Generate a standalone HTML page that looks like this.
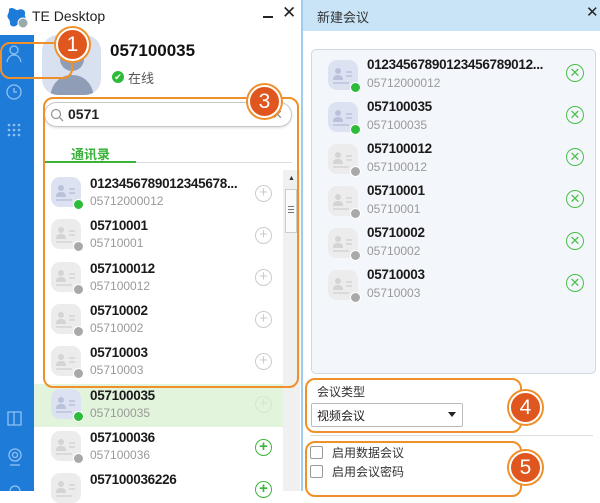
<!DOCTYPE html>
<html><head><meta charset="utf-8"><style>
*{margin:0;padding:0;box-sizing:border-box}
body{width:600px;height:491px;overflow:hidden;background:#fff;font-family:"Liberation Sans","Noto Sans CJK SC",sans-serif;position:relative}
.a{position:absolute}
.av{position:absolute;width:30px;height:30px;border-radius:9px;background:#dde2f2}
.av.off{background:#ececec}
.av svg{position:absolute;left:0;top:0}
.dot{position:absolute;right:-3px;bottom:-3px;width:11px;height:11px;border-radius:50%;background:#2dbb3a;border:1.5px solid #fff}
.av.off .dot{background:#a9a9a9}
.nm{position:absolute;font-size:13.5px;font-weight:bold;color:#1a1a1a;white-space:nowrap;letter-spacing:-0.3px}
.sb{position:absolute;font-size:12px;color:#999;white-space:nowrap}
.plus{position:absolute;width:17px;height:17px;border-radius:50%;border:1px solid #ccc;color:#ccc;font-size:15px;line-height:14px;text-align:center}
.plus.g{border:1.5px solid #3db43a;color:#3db43a;font-weight:bold}
.xx{position:absolute;width:18px;height:18px;border-radius:50%;border:1.5px solid #4cc04a;color:#4cc04a;font-size:13px;line-height:15px;text-align:center}
.box{position:absolute;border:2px solid #f0902a;border-radius:10px}
.num{position:absolute;width:33px;height:33px;border-radius:50%;background:#e0561f;border:2px solid #fff;box-shadow:0 0 0 2px #f0902a;color:#fff;font-size:21px;line-height:29px;text-align:center;font-family:"Liberation Sans",sans-serif}
</style></head><body>
<div class="a" style="left:0;top:35px;width:34px;height:456px;background:#1f7bd8"></div>
<svg class="a" style="left:0;top:35px" width="34" height="456" fill="none" stroke="#8fc2f2" stroke-width="1.3">
<circle cx="14" cy="15" r="4"/><path d="M7 27c1-5 4-7 7-7s6 2 7 7"/>
<circle cx="14" cy="57" r="7"/><path d="M14 53v4h3"/>
<g fill="#8fc2f2" stroke="none"><circle cx="9" cy="90" r="1.3"/><circle cx="14" cy="90" r="1.3"/><circle cx="19" cy="90" r="1.3"/><circle cx="9" cy="95" r="1.3"/><circle cx="14" cy="95" r="1.3"/><circle cx="19" cy="95" r="1.3"/><circle cx="9" cy="100" r="1.3"/><circle cx="14" cy="100" r="1.3"/><circle cx="19" cy="100" r="1.3"/></g>
<path d="M8 377h6v13h-6zM14 377h7v13h-7z"/>
<circle cx="15" cy="420" r="6"/><circle cx="15" cy="420" r="2.5"/><path d="M10 430h10"/>
<circle cx="15" cy="456" r="5"/>
</svg>
<svg class="a" style="left:4px;top:5px" width="26" height="24"><path d="M5 4c4-3 7 2 9 1 3-2 8 0 7 4-1 3 3 5 0 8-3 3-6 0-8 3-3 3-8 1-7-3 0-3-4-4-2-8 1-2 1-3 1-5z" fill="#1f7bd8"/><circle cx="19" cy="18" r="5" fill="#9aa" stroke="#fff"/></svg>
<div class="a" style="left:32px;top:8px;font-size:14px;color:#222">TE Desktop</div>
<div class="a" style="left:263px;top:16px;width:10px;height:2px;background:#222"></div>
<div class="a" style="left:282px;top:3px;font-size:17px;color:#222">✕</div>
<div class="a" style="left:42px;top:35px;width:59px;height:60px;border-radius:16px;background:#d9e0f0;overflow:hidden"><svg width="59" height="60"><circle cx="30" cy="24" r="12" fill="#909db6"/><path d="M8 62c2-16 12-22 22-22s20 6 22 22z" fill="#909db6"/></svg></div>
<div class="a" style="left:110px;top:41px;font-size:17px;font-weight:bold;color:#111">057100035</div>
<div class="a" style="left:112px;top:71px;width:12px;height:12px;border-radius:50%;background:#2dbb3a;color:#fff;font-size:9px;line-height:12px;text-align:center">✔</div>
<div class="a" style="left:128px;top:68px;font-size:13px;color:#555">在线</div>
<div class="a" style="left:44px;top:102px;width:248px;height:25px;border:1px solid #c8c8c8;border-radius:13px;box-shadow:0 1px 2px #ddd"></div>
<svg class="a" style="left:50px;top:108px" width="14" height="14" fill="none" stroke="#999" stroke-width="1.3"><circle cx="6" cy="6" r="4.5"/><path d="M9.5 9.5l3.5 3.5"/></svg>
<div class="a" style="left:68px;top:106px;font-size:14px;font-weight:bold;color:#222">0571</div>
<div class="a" style="left:272px;top:107px;font-size:13px;color:#888">✕</div>
<div class="a" style="left:71px;top:144px;font-size:13px;font-weight:bold;color:#3bb33a">通讯录</div>
<div class="a" style="left:44px;top:162px;width:248px;height:1px;background:#ddd"></div>
<div class="a" style="left:44px;top:161px;width:92px;height:2px;background:#3bb33a"></div>
<div class="a" style="left:283px;top:170px;width:17px;height:321px;background:#f0f0f0"></div>
<div class="a" style="left:285px;top:189px;width:12px;height:44px;background:#fafafa;border:1px solid #ccc"></div>
<div class="a" style="left:288px;top:175px;font-size:7px;color:#333">▲</div>
<div class="a" style="left:288px;top:206px;width:6px;height:1px;background:#777;box-shadow:0 3px #777,0 6px #777"></div>
<div class="a" style="left:34px;top:384px;width:249px;height:43px;background:#e2f4dc"></div>

<div class="av" style="left:51px;top:177px"><svg width="30" height="30"><circle cx="10" cy="11" r="3" fill="#b9c2da"/><path d="M5 20c0-4 2-5 5-5s5 1 5 5z" fill="#b9c2da"/><path d="M18 12h6M18 16h6M5 23h16" stroke="#b9c2da" stroke-width="1.5"/></svg><div class="dot"></div></div>
<div class="nm" style="left:90px;top:176px">0123456789012345678...</div><div class="sb" style="left:90px;top:194px">05712000012</div><div class="plus" style="left:255px;top:185px">+</div>

<div class="av off" style="left:51px;top:219px"><svg width="30" height="30"><circle cx="10" cy="11" r="3" fill="#d4d4d4"/><path d="M5 20c0-4 2-5 5-5s5 1 5 5z" fill="#d4d4d4"/><path d="M18 12h6M18 16h6M5 23h16" stroke="#d4d4d4" stroke-width="1.5"/></svg><div class="dot"></div></div>
<div class="nm" style="left:90px;top:218px">05710001</div><div class="sb" style="left:90px;top:236px">05710001</div><div class="plus" style="left:255px;top:227px">+</div>

<div class="av off" style="left:51px;top:262px"><svg width="30" height="30"><circle cx="10" cy="11" r="3" fill="#d4d4d4"/><path d="M5 20c0-4 2-5 5-5s5 1 5 5z" fill="#d4d4d4"/><path d="M18 12h6M18 16h6M5 23h16" stroke="#d4d4d4" stroke-width="1.5"/></svg><div class="dot"></div></div>
<div class="nm" style="left:90px;top:261px">057100012</div><div class="sb" style="left:90px;top:279px">057100012</div><div class="plus" style="left:255px;top:269px">+</div>

<div class="av off" style="left:51px;top:304px"><svg width="30" height="30"><circle cx="10" cy="11" r="3" fill="#d4d4d4"/><path d="M5 20c0-4 2-5 5-5s5 1 5 5z" fill="#d4d4d4"/><path d="M18 12h6M18 16h6M5 23h16" stroke="#d4d4d4" stroke-width="1.5"/></svg><div class="dot"></div></div>
<div class="nm" style="left:90px;top:303px">05710002</div><div class="sb" style="left:90px;top:321px">05710002</div><div class="plus" style="left:255px;top:311px">+</div>

<div class="av off" style="left:51px;top:346px"><svg width="30" height="30"><circle cx="10" cy="11" r="3" fill="#d4d4d4"/><path d="M5 20c0-4 2-5 5-5s5 1 5 5z" fill="#d4d4d4"/><path d="M18 12h6M18 16h6M5 23h16" stroke="#d4d4d4" stroke-width="1.5"/></svg><div class="dot"></div></div>
<div class="nm" style="left:90px;top:345px">05710003</div><div class="sb" style="left:90px;top:363px">05710003</div><div class="plus" style="left:255px;top:353px">+</div>

<div class="av" style="left:51px;top:389px"><svg width="30" height="30"><circle cx="10" cy="11" r="3" fill="#b9c2da"/><path d="M5 20c0-4 2-5 5-5s5 1 5 5z" fill="#b9c2da"/><path d="M18 12h6M18 16h6M5 23h16" stroke="#b9c2da" stroke-width="1.5"/></svg><div class="dot"></div></div>
<div class="nm" style="left:90px;top:388px">057100035</div><div class="sb" style="left:90px;top:406px">057100035</div><div class="plus" style="left:255px;top:396px;border-color:#d6e6d0;color:#d6e6d0">+</div>

<div class="av off" style="left:51px;top:431px"><svg width="30" height="30"><circle cx="10" cy="11" r="3" fill="#d4d4d4"/><path d="M5 20c0-4 2-5 5-5s5 1 5 5z" fill="#d4d4d4"/><path d="M18 12h6M18 16h6M5 23h16" stroke="#d4d4d4" stroke-width="1.5"/></svg><div class="dot"></div></div>
<div class="nm" style="left:90px;top:430px">057100036</div><div class="sb" style="left:90px;top:448px">057100036</div><div class="plus g" style="left:255px;top:439px">+</div>

<div class="av off" style="left:51px;top:473px"><svg width="30" height="30"><circle cx="10" cy="11" r="3" fill="#d4d4d4"/><path d="M5 20c0-4 2-5 5-5s5 1 5 5z" fill="#d4d4d4"/><path d="M18 12h6M18 16h6M5 23h16" stroke="#d4d4d4" stroke-width="1.5"/></svg></div>
<div class="nm" style="left:90px;top:472px">057100036226</div><div class="plus g" style="left:255px;top:481px">+</div>

<div class="a" style="left:301px;top:0;width:2px;height:491px;background:#9fcdf0"></div>
<div class="a" style="left:303px;top:0;width:297px;height:31px;background:#c9e4f7"></div>
<div class="a" style="left:317px;top:7px;font-size:13px;color:#333">新建会议</div>
<div class="a" style="left:586px;top:3px;font-size:15px;color:#222">✕</div>
<div class="a" style="left:311px;top:49px;width:285px;height:325px;background:#f3f6fa;border:1px solid #cfd8e3;border-radius:5px"></div>

<div class="av" style="left:328px;top:60px"><svg width="30" height="30"><circle cx="10" cy="11" r="3" fill="#b9c2da"/><path d="M5 20c0-4 2-5 5-5s5 1 5 5z" fill="#b9c2da"/><path d="M18 12h6M18 16h6M5 23h16" stroke="#b9c2da" stroke-width="1.5"/></svg><div class="dot"></div></div>
<div class="nm" style="left:367px;top:57px">01234567890123456789012...</div><div class="sb" style="left:367px;top:76px">05712000012</div><div class="xx" style="left:566px;top:64px">✕</div>

<div class="av" style="left:328px;top:102px"><svg width="30" height="30"><circle cx="10" cy="11" r="3" fill="#b9c2da"/><path d="M5 20c0-4 2-5 5-5s5 1 5 5z" fill="#b9c2da"/><path d="M18 12h6M18 16h6M5 23h16" stroke="#b9c2da" stroke-width="1.5"/></svg><div class="dot"></div></div>
<div class="nm" style="left:367px;top:99px">057100035</div><div class="sb" style="left:367px;top:118px">057100035</div><div class="xx" style="left:566px;top:106px">✕</div>

<div class="av off" style="left:328px;top:144px"><svg width="30" height="30"><circle cx="10" cy="11" r="3" fill="#d4d4d4"/><path d="M5 20c0-4 2-5 5-5s5 1 5 5z" fill="#d4d4d4"/><path d="M18 12h6M18 16h6M5 23h16" stroke="#d4d4d4" stroke-width="1.5"/></svg><div class="dot"></div></div>
<div class="nm" style="left:367px;top:141px">057100012</div><div class="sb" style="left:367px;top:160px">057100012</div><div class="xx" style="left:566px;top:148px">✕</div>

<div class="av off" style="left:328px;top:186px"><svg width="30" height="30"><circle cx="10" cy="11" r="3" fill="#d4d4d4"/><path d="M5 20c0-4 2-5 5-5s5 1 5 5z" fill="#d4d4d4"/><path d="M18 12h6M18 16h6M5 23h16" stroke="#d4d4d4" stroke-width="1.5"/></svg><div class="dot"></div></div>
<div class="nm" style="left:367px;top:183px">05710001</div><div class="sb" style="left:367px;top:202px">05710001</div><div class="xx" style="left:566px;top:190px">✕</div>

<div class="av off" style="left:328px;top:228px"><svg width="30" height="30"><circle cx="10" cy="11" r="3" fill="#d4d4d4"/><path d="M5 20c0-4 2-5 5-5s5 1 5 5z" fill="#d4d4d4"/><path d="M18 12h6M18 16h6M5 23h16" stroke="#d4d4d4" stroke-width="1.5"/></svg><div class="dot"></div></div>
<div class="nm" style="left:367px;top:225px">05710002</div><div class="sb" style="left:367px;top:244px">05710002</div><div class="xx" style="left:566px;top:232px">✕</div>

<div class="av off" style="left:328px;top:270px"><svg width="30" height="30"><circle cx="10" cy="11" r="3" fill="#d4d4d4"/><path d="M5 20c0-4 2-5 5-5s5 1 5 5z" fill="#d4d4d4"/><path d="M18 12h6M18 16h6M5 23h16" stroke="#d4d4d4" stroke-width="1.5"/></svg><div class="dot"></div></div>
<div class="nm" style="left:367px;top:267px">05710003</div><div class="sb" style="left:367px;top:286px">05710003</div><div class="xx" style="left:566px;top:274px">✕</div>

<div class="a" style="left:317px;top:383px;font-size:12px;color:#333">会议类型</div>
<div class="a" style="left:311px;top:403px;width:152px;height:24px;border:1px solid #bbb;border-radius:2px;background:#fff"></div>
<div class="a" style="left:317px;top:407px;font-size:12px;color:#222">视频会议</div>
<div class="a" style="left:448px;top:412px;width:0;height:0;border-left:4px solid transparent;border-right:4px solid transparent;border-top:5px solid #222"></div>
<div class="a" style="left:310px;top:435px;width:283px;height:1px;background:#ddd"></div>
<div class="a" style="left:310px;top:446px;width:13px;height:13px;border:1px solid #999;border-radius:2px"></div>
<div class="a" style="left:332px;top:444px;font-size:12px;color:#333">启用数据会议</div>
<div class="a" style="left:310px;top:465px;width:13px;height:13px;border:1px solid #999;border-radius:2px"></div>
<div class="a" style="left:332px;top:463px;font-size:12px;color:#333">启用会议密码</div>

<div class="box" style="left:0;top:42px;width:73px;height:37px"></div>
<div class="num" style="left:56px;top:28px">1</div>
<div class="box" style="left:43px;top:97px;width:256px;height:291px"></div>
<div class="num" style="left:248px;top:85px">3</div>
<div class="box" style="left:305px;top:378px;width:217px;height:55px"></div>
<div class="num" style="left:509px;top:391px">4</div>
<div class="box" style="left:305px;top:441px;width:217px;height:56px"></div>
<div class="num" style="left:509px;top:451px">5</div>
</body></html>
